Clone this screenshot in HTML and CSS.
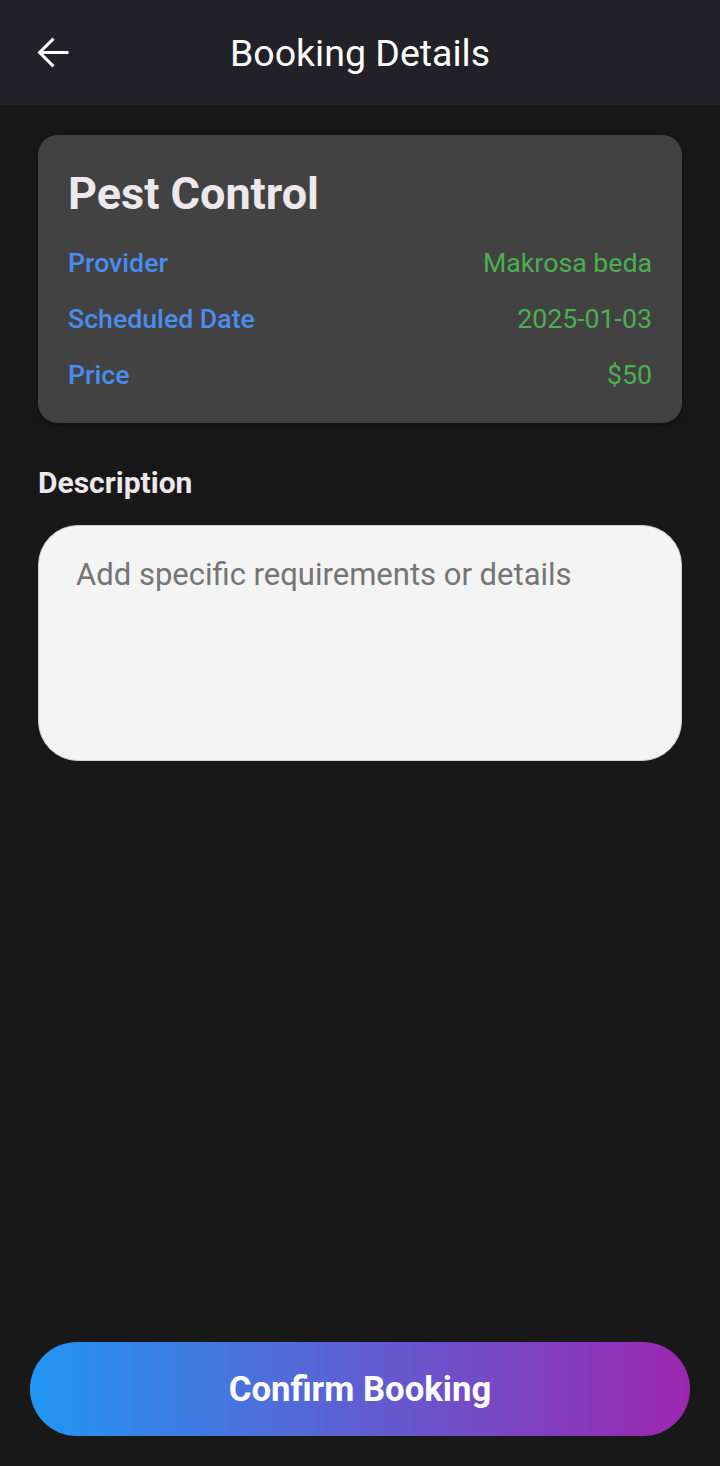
FILE: index.html
```html
<!DOCTYPE html>
<html>
<head>
<meta charset="utf-8">
<link rel="stylesheet" href="styles.css">
</head>
<body>
<div class="screen">
  <header class="appbar">
    <button class="back" aria-label="Back">
      <svg width="45" height="45" viewBox="0 0 24 24" fill="none" stroke="#ffffff" stroke-width="1.6" stroke-linecap="butt" stroke-linejoin="miter"><path d="M20 12H5.2M12 4.6L4.6 12l7.4 7.4"/></svg>
    </button>
    <h1 class="title">Booking Details</h1>
  </header>
  <main class="content">
    <section class="card">
      <h2 class="service">Pest Control</h2>
      <div class="row"><span class="label">Provider</span><span class="value">Makrosa beda</span></div>
      <div class="row"><span class="label">Scheduled Date</span><span class="value">2025-01-03</span></div>
      <div class="row"><span class="label">Price</span><span class="value">$50</span></div>
    </section>
    <h3 class="desc-label">Description</h3>
    <div class="textarea"><span class="placeholder">Add specific requirements or details</span></div>
  </main>
  <footer class="footer">
    <button class="confirm">Confirm Booking</button>
  </footer>
</div>
</body>
</html>
```

FILE: styles.css
```css
* { box-sizing: border-box; }
html, body { margin: 0; padding: 0; }
body {
  background: #181818;
  font-family: Roboto, "Liberation Sans", sans-serif;
  width: 720px;
  height: 1466px;
  overflow: hidden;
}
.screen {
  display: flex;
  flex-direction: column;
  height: 1466px;
}
.appbar {
  height: 105px;
  background: #222127;
  display: flex;
  align-items: center;
  position: relative;
  justify-content: center;
}
.back {
  position: absolute;
  left: 31px;
  top: 30px;
  background: none;
  border: 0;
  padding: 0;
  width: 45px;
  height: 45px;
  display: flex;
}
.title {
  margin: 0;
  color: #ffffff;
  font-weight: 400;
  font-size: 37.5px;
  letter-spacing: 0;
}
.content {
  flex: 1;
  padding: 30px 38px 0;
}
.card {
  background: #424242;
  border-radius: 20px;
  padding: 27px 30px 20px;
  box-shadow: 0 2px 6px rgba(0,0,0,0.4);
}
.service {
  margin: 0 0 9px;
  color: #ece8ec;
  font-size: 45px;
  font-weight: 700;
  line-height: 64px;
}
.row {
  display: flex;
  justify-content: space-between;
  align-items: center;
  height: 56px;
  font-size: 26.7px;
}
.label { color: #4a8cf0; font-weight: 500; }
.value { color: #4caf50; font-weight: 400; }
.desc-label {
  margin: 44px 0 26px;
  color: #ece8ec;
  font-size: 30px;
  font-weight: 700;
  line-height: 32px;
}
.textarea {
  height: 236px;
  background: #f4f4f4;
  border: 1px solid #d0d0d0;
  border-radius: 40px;
  padding: 31px 37px;
}
.placeholder {
  color: #757575;
  font-size: 31px;
  line-height: 36px;
}
.footer {
  padding: 0 30px 30px;
}
.confirm {
  width: 100%;
  height: 94px;
  border: 0;
  border-radius: 47px;
  background: linear-gradient(90deg, #2196f3, #9c27b0);
  color: #ffffff;
  font-family: Roboto, "Liberation Sans", sans-serif;
  font-size: 34.7px;
  font-weight: 700;
}
```
